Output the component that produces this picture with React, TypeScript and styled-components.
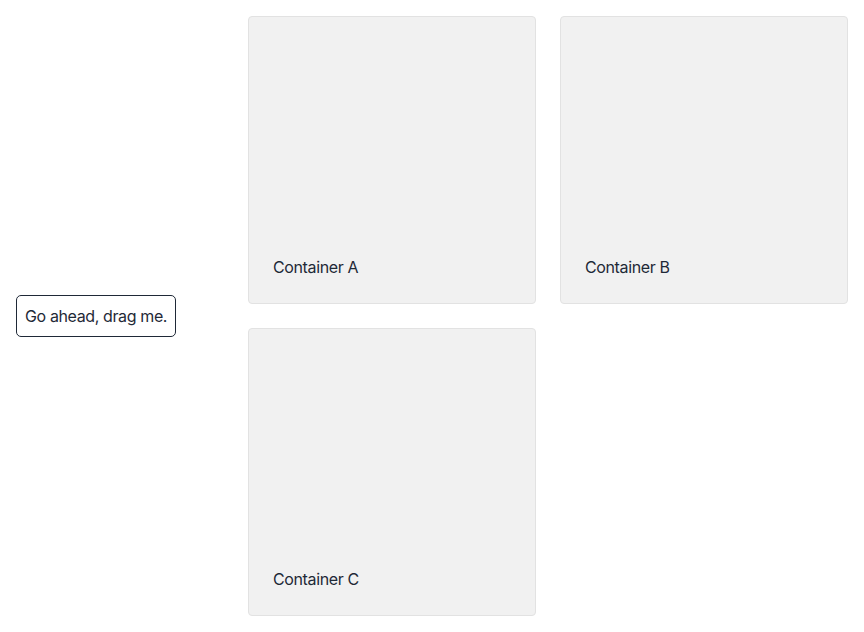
import styled, { createGlobalStyle } from "styled-components";

const containers = ["A", "B", "C"];

const GlobalStyle = createGlobalStyle`
  body {
    margin: 0;
    font-family: Inter, "Liberation Sans", sans-serif;
    letter-spacing: -0.38px;
    color: #1f2937;
    background: #fff;
  }
`;

const StyledPage = styled.div`
  display: flex;
  align-items: center;
  padding: 16px;
`;

const StyledSource = styled.div`
  width: 232px;
  flex-shrink: 0;
`;

const StyledDraggable = styled.button`
  padding: 8px;
  border: 1px solid #1f2937;
  border-radius: 5px;
  background: #fff;
  color: #1f2937;
  font-family: inherit;
  font-size: 16px;
  line-height: 24px;
  letter-spacing: inherit;
  cursor: grab;
`;

const StyledGrid = styled.div`
  display: grid;
  grid-template-columns: repeat(2, 288px);
  gap: 24px;
`;

const StyledDropZone = styled.div`
  display: flex;
  align-items: flex-end;
  box-sizing: border-box;
  height: 288px;
  padding: 24px;
  background: #f1f1f1;
  border: 1px solid #e2e2e2;
  border-radius: 4px;
  font-size: 16px;
  line-height: 24px;
`;

const App = () => {
  return (
    <>
      <GlobalStyle />
      <StyledPage>
        <StyledSource>
          <StyledDraggable>Go ahead, drag me.</StyledDraggable>
        </StyledSource>
        <StyledGrid>
          {containers.map((id) => (
            <StyledDropZone key={id}>Container {id}</StyledDropZone>
          ))}
        </StyledGrid>
      </StyledPage>
    </>
  );
};

export default App;
